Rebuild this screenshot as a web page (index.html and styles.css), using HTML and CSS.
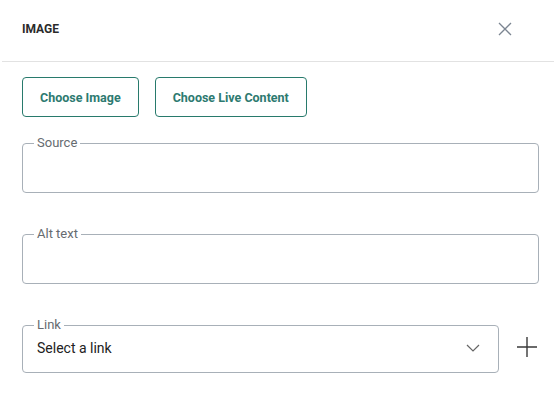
FILE: index.html
```html
<!DOCTYPE html>
<html lang="en">
<head>
<meta charset="utf-8">
<title>Image</title>
<link rel="stylesheet" href="styles.css">
</head>
<body>
<div class="dialog">
  <header class="header">
    <h1 class="title">IMAGE</h1>
    <button class="close" aria-label="Close">
      <svg width="14" height="14" viewBox="0 0 14 14"><path d="M1 1L13 13M13 1L1 13" stroke="#7b8591" stroke-width="1.3" fill="none"/></svg>
    </button>
  </header>
  <div class="body">
    <div class="actions">
      <button class="btn">Choose Image</button>
      <button class="btn">Choose Live Content</button>
    </div>
    <fieldset class="field">
      <legend class="legend">Source</legend>
      <div class="value"></div>
    </fieldset>
    <fieldset class="field">
      <legend class="legend">Alt text</legend>
      <div class="value"></div>
    </fieldset>
    <div class="link-row">
      <fieldset class="field grow">
        <legend class="legend">Link</legend>
        <div class="value select">
          <span>Select a link</span>
          <svg width="14" height="8" viewBox="0 0 14 8"><path d="M1 1L7 7L13 1" stroke="#666" stroke-width="1.2" fill="none"/></svg>
        </div>
      </fieldset>
      <button class="add" aria-label="Add link">
        <svg width="20" height="20" viewBox="0 0 20 20"><path d="M10 0V20M0 10H20" stroke="#3a3a3a" stroke-width="1.4" fill="none"/></svg>
      </button>
    </div>
  </div>
</div>
</body>
</html>
```
FILE: styles.css
```css
* { box-sizing: border-box; }
html, body { margin: 0; padding: 0; background: #fff; }
body { font-family: Roboto, "Noto Sans", Arial, sans-serif; color: #222; }
.dialog { width: 554px; height: 399px; }
.header {
  height: 62px;
  display: flex;
  align-items: center;
  justify-content: space-between;
  padding: 0 42px 4px 20px;
  border-bottom: 1px solid #e2e2e2;
  margin-left: 2px;
}
.title { margin: 0; font-size: 12px; font-weight: 700; color: #2b2b2b; }
.close { border: 0; background: none; padding: 0; display: flex; cursor: pointer; }
.body { padding: 15px 15px 0 22px; display: flex; flex-direction: column; }
.actions { display: flex; gap: 16px; margin-bottom: 19px; }
.btn {
  height: 40px;
  padding: 0 17px;
  border: 1px solid #287a6c;
  border-radius: 4px;
  background: #fff;
  color: #2d7a70;
  font-family: Roboto, Arial, sans-serif;
  font-size: 12.5px;
  font-weight: 700;
}
.field {
  margin: 0 0 34px 0;
  padding: 0 14px;
  border: 1px solid #a8b0b8;
  border-radius: 4px;
  min-width: 0;
}
.legend {
  margin-left: -3px;
  padding: 0 3px;
  font-size: 13px;
  color: #666b70;
  line-height: 14px;
}
.value { height: 42px; }
.select {
  display: flex;
  align-items: center;
  justify-content: space-between;
  font-size: 14px;
  color: #222;
  padding-right: 4px;
  padding-bottom: 8px;
  height: 40px;
}
.link-row { display: flex; align-items: center; gap: 18px; }
.grow { flex: 1; margin-bottom: 0; }
.add { border: 0; background: none; padding: 0; width: 20px; height: 20px; display: flex; margin: 3px 2px 0 0; }
```
